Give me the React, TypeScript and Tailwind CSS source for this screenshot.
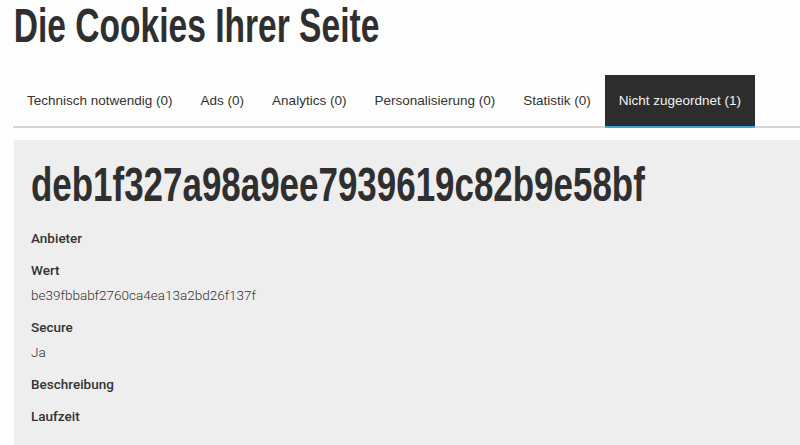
const TABS = [
  { label: "Technisch notwendig (0)", active: false },
  { label: "Ads (0)", active: false },
  { label: "Analytics (0)", active: false },
  { label: "Personalisierung (0)", active: false },
  { label: "Statistik (0)", active: false },
  { label: "Nicht zugeordnet (1)", active: true },
];

const FIELDS: { label: string; value?: string }[] = [
  { label: "Anbieter" },
  { label: "Wert", value: "be39fbbabf2760ca4ea13a2bd26f137f" },
  { label: "Secure", value: "Ja" },
  { label: "Beschreibung" },
  { label: "Laufzeit" },
];

// no condensed display face available, so squeeze Liberation Sans Bold
const display = "font-['Liberation_Sans',Arial,sans-serif]";

export default function App() {
  return (
    <div className="min-h-[445px] overflow-hidden bg-[#fdfdfd] pl-[13px] text-[#333]">
      <h1
        className={`${display} origin-left scale-x-[0.685] whitespace-nowrap pl-[1px] text-[49px] font-bold leading-[50px] text-[#2f2f2f]`}
      >
        Die Cookies Ihrer Seite
      </h1>

      <div className="mt-[25px] flex border-b-2 border-[#d6d6d6] font-['Liberation_Sans',Arial,sans-serif] text-[13.5px]">
        {TABS.map((tab) => (
          <div
            key={tab.label}
            className={
              tab.active
                ? "-mb-[2px] flex h-[53px] items-center whitespace-nowrap border-b-2 border-[#3ea5d8] bg-[#2d2d2d] px-[14px] pt-[1px] text-[#f2f2f2]"
                : "flex h-[51px] items-center whitespace-nowrap px-[14px] pt-[1px] text-[#333]"
            }
          >
            {tab.label}
          </div>
        ))}
      </div>

      <div className="ml-[1px] mt-[12px] bg-[#eeeeee] pb-[24px] pl-[17px] pt-[19px]">
        <h2
          className={`${display} origin-left scale-x-[0.713] whitespace-nowrap text-[49px] font-bold leading-[50px] text-[#2f2f2f]`}
        >
          deb1f327a98a9ee7939619c82b9e58bf
        </h2>
        <div className="mt-[19px] flex flex-col gap-[12px] font-['Roboto',sans-serif]">
          {FIELDS.map((f) => (
            <div key={f.label}>
              <p className="text-[13.5px] font-medium leading-[20px] text-[#333]">{f.label}</p>
              {f.value && (
                <p className="mt-[5px] text-[13.5px] font-light leading-[20px] text-[#333]">
                  {f.value}
                </p>
              )}
            </div>
          ))}
        </div>
      </div>
    </div>
  );
}
